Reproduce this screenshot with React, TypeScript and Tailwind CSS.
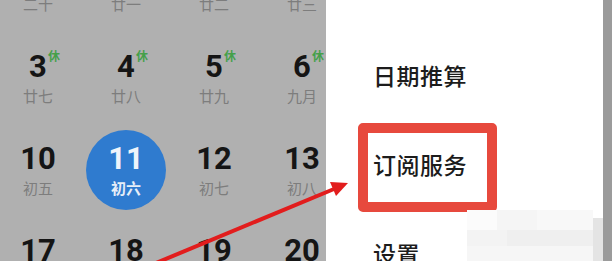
import React from 'react'

type Day = { n: string; lunar: string; rest?: boolean; selected?: boolean }

const rows: Day[][] = [
    [{ n: '26', lunar: '二十' }, { n: '27', lunar: '廿一' }, { n: '28', lunar: '廿二' }, { n: '29', lunar: '廿三' }],
    [{ n: '3', lunar: '廿七', rest: true }, { n: '4', lunar: '廿八', rest: true }, { n: '5', lunar: '廿九', rest: true }, { n: '6', lunar: '九月', rest: true }],
    [{ n: '10', lunar: '初五' }, { n: '11', lunar: '初六', selected: true }, { n: '12', lunar: '初七' }, { n: '13', lunar: '初八' }],
    [{ n: '17', lunar: '十二' }, { n: '18', lunar: '十三' }, { n: '19', lunar: '十四' }, { n: '20', lunar: '十五' }],
]

const menu = ['日期推算', '订阅服务', '设置']

const App = () => {
    return (
        <div className="relative w-[612px] h-[261px] overflow-hidden flex flex-row bg-[#b0b0b0]" style={{ fontFamily: 'Roboto, "Noto Sans CJK SC", sans-serif' }}>
            {/* calendar behind the dim */}
            <div className="w-[326px] h-full overflow-hidden shrink-0">
                <div className="ml-[-6px] mt-[-42px] flex flex-col">
                    {rows.map((row, ri) => (
                        <div key={ri} className="grid grid-cols-[repeat(4,88px)] h-[92px]">
                            {row.map((d, di) => (
                                <div key={di} className="h-[92px] flex flex-col items-center">
                                    <div className={`w-[80px] h-[80px] -mt-[12px] shrink-0 rounded-full flex flex-col items-center justify-center ${d.selected ? 'bg-[#2f7bcf]' : ''}`}>
                                        <span className={`relative text-[31px] leading-[36px] font-bold ${d.selected ? 'text-[#eef4fb]' : 'text-[#151515]'}`}>
                                            {d.n}
                                            {d.rest && <span className="absolute left-full top-[1px] ml-[1px] text-[12px] leading-[14px] font-bold text-[#45a04a]">休</span>}
                                        </span>
                                        <span className={`text-[15px] leading-[20px] mt-[2px] ${d.selected ? 'text-[#e6eef8] font-bold' : 'text-[#7d7d7d]'}`}>{d.lunar}</span>
                                    </div>
                                </div>
                            ))}
                        </div>
                    ))}
                </div>
            </div>

            {/* side menu */}
            <div className="relative flex-1 bg-white pt-[34px] pl-[32px] flex flex-col">
                {menu.map((m, i) => (
                    <div key={i} className={`w-[139px] h-[89px] shrink-0 flex items-center pl-[5px] border-[10px] rounded-[5px] ${i === 1 ? 'border-[#e7493d]' : 'border-transparent'}`}>
                        <span className="text-[23px] font-medium text-[#1c1c1c] tracking-[0.5px]">{m}</span>
                    </div>
                ))}
                <div className="absolute left-[141px] top-[210px] w-[126px] h-[51px] flex flex-col">
                    <div className="h-[20px] flex">
                        <div className="w-[30px] bg-[#fbfbfb]" />
                        <div className="w-[40px] bg-[#f5f5f5]" />
                        <div className="flex-1 bg-[#f8f8f8]" />
                    </div>
                    <div className="h-[16px] flex">
                        <div className="w-[40px] bg-[#f3f3f3]" />
                        <div className="flex-1 bg-[#efefef]" />
                    </div>
                    <div className="flex-1 bg-[#f6f6f6]" />
                </div>
                <div className="absolute right-0 top-[218px] w-[10px] h-[43px] bg-[#e4e4e4]" />
            </div>
            <div className="w-[9px] h-full bg-[#9b9b9b] shrink-0" />

            {/* red annotation arrow */}
            <svg className="absolute left-0 top-0 pointer-events-none" width="612" height="261" viewBox="0 0 612 261">
                <line x1="156" y1="263" x2="334" y2="189" stroke="#e21d1d" strokeWidth="4" />
                <polygon points="348,183 336,196 330,182" fill="#e21d1d" />
            </svg>
        </div>
    )
}

export default App
